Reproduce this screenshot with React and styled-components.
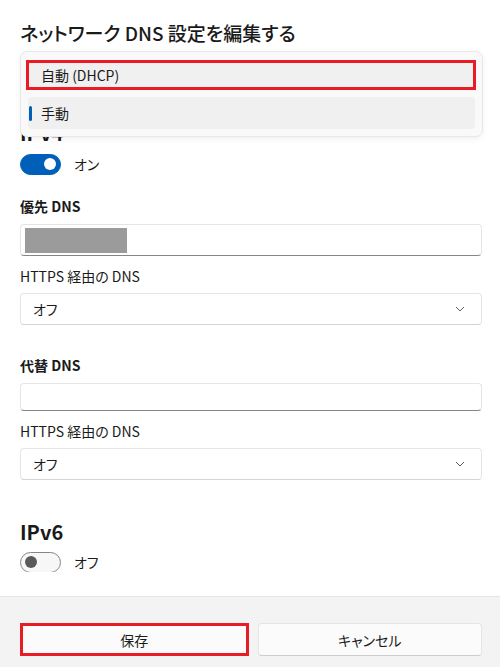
import React from "react";
import styled, { createGlobalStyle } from "styled-components";

const GlobalStyle = createGlobalStyle`
  html, body {
    margin: 0;
    padding: 0;
    background: #ffffff;
  }
  body {
    font-family: "Noto Sans CJK JP", "Noto Sans", sans-serif;
    font-feature-settings: "palt";
    color: #1b1b1b;
  }
  * {
    box-sizing: border-box;
  }
`;

export default function App() {
  return (
    <>
      <GlobalStyle />
      <Dialog>
        <Body>
          <Title>ネットワーク DNS 設定を編集する</Title>
          {/* combobox sits under the open menu */}
          <Select $top={9} />

          <Menu>
            <MenuItem $marked>自動 (DHCP)</MenuItem>
            <MenuItem $selected>
              <Indicator />
              手動
            </MenuItem>
          </Menu>

          <Heading $top={31}>IPv4</Heading>
          <ToggleRow $top={7}>
            <Toggle $on>
              <Knob $on />
            </Toggle>
            <ToggleText>オン</ToggleText>
          </ToggleRow>

          <FieldLabel $top={22}>優先 DNS</FieldLabel>
          <Input>
            <Redacted />
          </Input>
          <SubLabel>HTTPS 経由の DNS</SubLabel>
          <Select $top={7}>
            <SelectText>オフ</SelectText>
            <Chevron />
          </Select>

          <FieldLabel $top={30}>代替 DNS</FieldLabel>
          <Input />
          <SubLabel>HTTPS 経由の DNS</SubLabel>
          <Select $top={7}>
            <SelectText>オフ</SelectText>
            <Chevron />
          </Select>

          <Heading $top={38}>IPv6</Heading>
          <ToggleRow $top={6}>
            <Toggle>
              <Knob />
            </Toggle>
            <ToggleText>オフ</ToggleText>
          </ToggleRow>
        </Body>

        <Footer>
          <Button $marked>保存</Button>
          <Button>キャンセル</Button>
        </Footer>
      </Dialog>
    </>
  );
}

function Chevron() {
  return (
    <ChevronIcon width="10" height="6" viewBox="0 0 10 6">
      <path d="M1 1 L5 5 L9 1" fill="none" stroke="#5f5f5f" strokeWidth="1" />
    </ChevronIcon>
  );
}

const Dialog = styled.div`
  display: flex;
  flex-direction: column;
  height: 667px;
  background: #ffffff;
`;

const Body = styled.div`
  position: relative;
  flex: none;
  height: 572px;
  overflow: hidden;
  padding: 19px 18px 0 20px;
  display: flex;
  flex-direction: column;
`;

const Title = styled.h1`
  margin: 0;
  font-size: 19px;
  line-height: 28px;
  font-weight: 500;
  color: #1a1a1a;
`;

const Heading = styled.h2`
  margin: ${({ $top }) => $top}px 0 0;
  font-size: 20px;
  line-height: 28px;
  font-weight: 700;
  color: #1a1a1a;
`;

const Menu = styled.div`
  position: absolute;
  top: 51px;
  left: 20px;
  width: 463px;
  height: 86px;
  padding: 8px 6px 7px 5px;
  display: flex;
  flex-direction: column;
  background: #f9f9f9;
  border: 1px solid #e8e8e8;
  border-radius: 7px;
  box-shadow: 0 2px 6px rgba(0, 0, 0, 0.06);
  z-index: 2;
`;

const MenuItem = styled.div`
  position: relative;
  display: flex;
  align-items: center;
  height: ${({ $marked }) => ($marked ? 31 : 33)}px;
  margin: ${({ $selected }) => ($selected ? "7px 1px 0 2px" : "0")};
  padding-left: ${({ $marked }) => ($marked ? 12 : 13)}px;
  font-size: 14px;
  color: #1b1b1b;
  background: ${({ $marked, $selected }) =>
    $marked || $selected ? "#f0f0f0" : "transparent"};
  border: ${({ $marked }) => ($marked ? "3px solid #e81c25" : "none")};
  border-radius: ${({ $marked }) => ($marked ? 0 : 4)}px;
`;

const Indicator = styled.span`
  position: absolute;
  left: 1px;
  top: 9px;
  width: 3px;
  height: 15px;
  border-radius: 2px;
  background: #005fb8;
`;

const ToggleRow = styled.div`
  display: flex;
  align-items: center;
  gap: 13px;
  margin-top: ${({ $top }) => $top}px;
  height: 20px;
`;

const Toggle = styled.div`
  display: flex;
  align-items: center;
  justify-content: ${({ $on }) => ($on ? "flex-end" : "flex-start")};
  width: 41px;
  height: 21px;
  padding: 0 4px;
  border-radius: 11px;
  background: ${({ $on }) => ($on ? "#005fb8" : "#f7f7f7")};
  border: 1px solid ${({ $on }) => ($on ? "#005fb8" : "#858585")};
`;

const Knob = styled.span`
  width: 12px;
  height: 12px;
  border-radius: 50%;
  background: ${({ $on }) => ($on ? "#ffffff" : "#5a5a5a")};
`;

const ToggleText = styled.span`
  font-size: 14px;
  line-height: 20px;
  color: #1b1b1b;
`;

const FieldLabel = styled.div`
  margin-top: ${({ $top }) => $top}px;
  font-size: 14px;
  line-height: 20px;
  font-weight: 700;
  color: #1a1a1a;
`;

const SubLabel = styled.div`
  margin-top: 10px;
  font-size: 14px;
  line-height: 20px;
  color: #1b1b1b;
`;

const Input = styled.div`
  display: flex;
  align-items: flex-start;
  margin-top: 8px;
  height: 32px;
  padding: 3px 4px;
  background: #ffffff;
  border: 1px solid #e5e5e5;
  border-bottom: 1px solid #868686;
  border-radius: 4px;
`;

const Redacted = styled.div`
  width: 102px;
  height: 25px;
  background: #9b9b9b;
`;

const Select = styled.div`
  display: flex;
  align-items: center;
  justify-content: space-between;
  flex: none;
  margin-top: ${({ $top }) => $top}px;
  height: 32px;
  padding: 0 16px 0 12px;
  background: #ffffff;
  border: 1px solid #e5e5e5;
  border-bottom-color: #d4d4d4;
  border-radius: 4px;
`;

const SelectText = styled.span`
  font-size: 14px;
  color: #1b1b1b;
`;

const ChevronIcon = styled.svg`
  display: block;
`;

const Footer = styled.div`
  margin-top: auto;
  height: 71px;
  display: flex;
  gap: 9px;
  padding: 26px 18px 0 20px;
  background: #f3f3f3;
  border-top: 1px solid #e5e5e5;
`;

const Button = styled.button`
  flex: 1;
  height: 33px;
  display: flex;
  align-items: center;
  justify-content: center;
  font-family: inherit;
  font-feature-settings: "palt";
  font-size: 14px;
  color: #1b1b1b;
  background: #fbfbfb;
  border: ${({ $marked }) =>
    $marked ? "3px solid #e81c25" : "1px solid #e5e5e5"};
  border-bottom-color: ${({ $marked }) => ($marked ? "#e81c25" : "#cccccc")};
  border-radius: ${({ $marked }) => ($marked ? 0 : 4)}px;
  cursor: pointer;
`;
